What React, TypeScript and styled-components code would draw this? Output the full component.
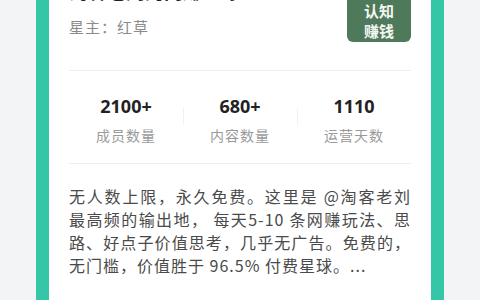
import styled, { createGlobalStyle } from "styled-components";

const GlobalStyle = createGlobalStyle`
  html, body {
    margin: 0;
    padding: 0;
    background: #f3f4f6;
    font-family: "Noto Sans CJK SC", "Noto Sans", sans-serif;
  }
`;

const stats = [
  { value: "2100+", label: "成员数量" },
  { value: "680+", label: "内容数量" },
  { value: "1110", label: "运营天数" },
];

const lines = [
  "无人数上限，永久免费。这里是 @淘客老刘",
  "最高频的输出地， 每天5-10 条网赚玩法、思",
  "路、好点子价值思考，几乎无广告。免费的，",
  "无门槛，价值胜于 96.5% 付费星球。...",
];

export default function App() {
  return (
    <>
      <GlobalStyle />
      <Page>
        <Card>
          <Header>
            <Info>
              <Title>淘客老刘的网赚星球</Title>
              <Owner>星主：红草</Owner>
            </Info>
            <Badge>
              <span>认知</span>
              <span>赚钱</span>
            </Badge>
          </Header>
          <Divider />
          <Stats>
            {stats.map((s, i) => (
              <Stat key={s.label} $first={i === 0}>
                <Value>{s.value}</Value>
                <Label>{s.label}</Label>
              </Stat>
            ))}
          </Stats>
          <Divider />
          <Desc>
            {lines.map((l, i) => (
              <Line key={i} $last={i === lines.length - 1}>
                {l}
              </Line>
            ))}
          </Desc>
        </Card>
      </Page>
    </>
  );
}

const Page = styled.div`
  padding: 0 36px;
  margin-top: -30px;
`;

const Card = styled.div`
  background: #fff;
  border: 13px solid #34c6a7;
  border-top: none;
  border-bottom: none;
  padding: 8px 20px 40px;
`;

const Header = styled.div`
  display: flex;
  justify-content: space-between;
  align-items: flex-start;
  margin-bottom: 28px;
`;

const Info = styled.div`
  display: flex;
  flex-direction: column;
`;

const Title = styled.div`
  font-size: 19px;
  line-height: 26px;
  font-weight: 700;
  color: #1f1f1f;
`;

const Owner = styled.div`
  margin-top: 12px;
  font-size: 15px;
  line-height: 22px;
  letter-spacing: 1px;
  color: #8a8a8a;
`;

const Badge = styled.div`
  width: 64px;
  height: 64px;
  box-sizing: border-box;
  border-radius: 0 0 6px 6px;
  background: #4e7a5b;
  color: #f4f6f2;
  font-size: 15px;
  font-weight: 700;
  line-height: 20px;
  display: flex;
  flex-direction: column;
  align-items: center;
  justify-content: flex-end;
  padding-bottom: 1px;
`;

const Divider = styled.div`
  height: 1px;
  background: #efefef;
`;

const Stats = styled.div`
  display: grid;
  grid-template-columns: repeat(3, 1fr);
  padding: 23px 0 18px;
`;

const Stat = styled.div<{ $first: boolean }>`
  position: relative;
  display: flex;
  flex-direction: column;
  align-items: center;
  &::before {
    content: "";
    display: ${(p) => (p.$first ? "none" : "block")};
    position: absolute;
    left: 0;
    top: 14px;
    height: 17px;
    width: 1px;
    background: #f0f0f0;
  }
`;

const Value = styled.div`
  font-family: "Noto Sans", sans-serif;
  font-size: 18px;
  line-height: 24px;
  font-weight: 700;
  color: #222;
`;

const Label = styled.div`
  margin-top: 7px;
  font-size: 14px;
  line-height: 20px;
  letter-spacing: 1px;
  color: #9a9a9a;
`;

const Desc = styled.div`
  padding-top: 21px;
  font-size: 16px;
  line-height: 23px;
  color: #4a4a4a;
`;

const Line = styled.div<{ $last: boolean }>`
  white-space: nowrap;
  letter-spacing: 1px;
  text-align: justify;
  text-align-last: ${(p) => (p.$last ? "left" : "justify")};
`;
